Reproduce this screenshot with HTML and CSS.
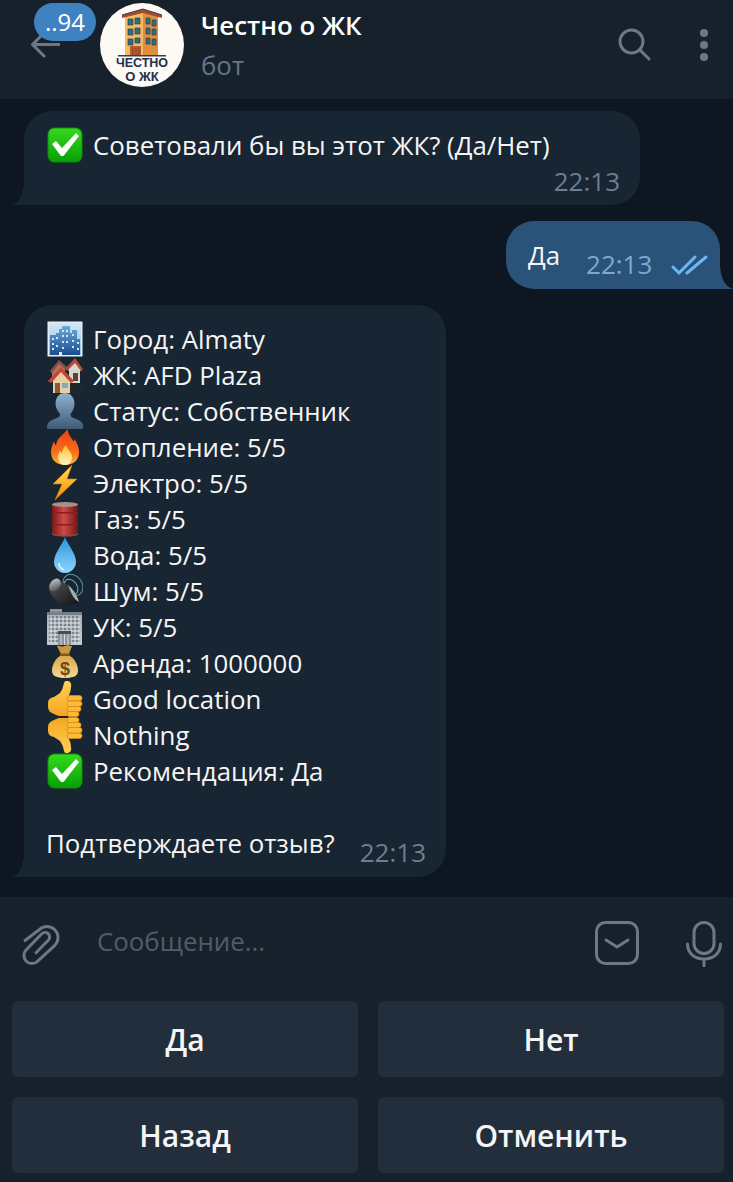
FILE: index.html
```html
<!DOCTYPE html>
<html lang="ru">
<head>
<meta charset="utf-8">
<title>Честно о ЖК</title>
<link rel="stylesheet" href="styles.css">
</head>
<body>
<svg class="defs" width="0" height="0" aria-hidden="true">
  <defs>
    <linearGradient id="gGreen" x1="0" y1="0" x2="0" y2="1"><stop offset="0" stop-color="#35d91c"/><stop offset="1" stop-color="#07a006"/></linearGradient>
    <linearGradient id="gCity" x1="0" y1="0" x2="0" y2="1"><stop offset="0" stop-color="#cfe8f8"/><stop offset="1" stop-color="#8fbde0"/></linearGradient>
    <linearGradient id="gTower" x1="0" y1="0" x2="0" y2="1"><stop offset="0" stop-color="#6ea8dc"/><stop offset="1" stop-color="#1a4c90"/></linearGradient>
    <linearGradient id="gPerson" x1="0" y1="0" x2="0" y2="1"><stop offset="0" stop-color="#90b3d2"/><stop offset="1" stop-color="#3c5a78"/></linearGradient>
    <linearGradient id="gFire" x1="0" y1="0" x2="0" y2="1"><stop offset="0" stop-color="#ee3a16"/><stop offset="0.65" stop-color="#f6721a"/><stop offset="1" stop-color="#ffb52e"/></linearGradient>
    <linearGradient id="gFlame" x1="0" y1="0" x2="0" y2="1"><stop offset="0" stop-color="#ffc02e"/><stop offset="1" stop-color="#fff6c8"/></linearGradient>
    <linearGradient id="gBolt" x1="0" y1="0" x2="0" y2="1"><stop offset="0" stop-color="#ffe14a"/><stop offset="1" stop-color="#f58a10"/></linearGradient>
    <linearGradient id="gBarrel" x1="0" y1="0" x2="1" y2="0"><stop offset="0" stop-color="#7a1818"/><stop offset="0.45" stop-color="#d04a4a"/><stop offset="1" stop-color="#6d1414"/></linearGradient>
    <linearGradient id="gDrop" x1="0" y1="0" x2="0" y2="1"><stop offset="0" stop-color="#2a94dc"/><stop offset="1" stop-color="#8fd6fa"/></linearGradient>
    <linearGradient id="gCone" x1="0" y1="0" x2="1" y2="1"><stop offset="0" stop-color="#55585c"/><stop offset="1" stop-color="#111215"/></linearGradient>
    <linearGradient id="gMagnet" x1="0" y1="0" x2="1" y2="1"><stop offset="0" stop-color="#d5d8db"/><stop offset="1" stop-color="#3b3d41"/></linearGradient>
    <linearGradient id="gOffice" x1="0" y1="0" x2="0" y2="1"><stop offset="0" stop-color="#a9b0b6"/><stop offset="1" stop-color="#c4cacf"/></linearGradient>
    <linearGradient id="gBag" x1="0" y1="0" x2="0" y2="1"><stop offset="0" stop-color="#dba74e"/><stop offset="1" stop-color="#f4d98f"/></linearGradient>
    <linearGradient id="gThumb" x1="0" y1="0" x2="0" y2="1"><stop offset="0" stop-color="#ffd152"/><stop offset="1" stop-color="#f5a623"/></linearGradient>

    <symbol id="e-check" viewBox="0 0 36 36">
      <rect x="0.5" y="0.5" width="35" height="35" rx="7" fill="#0c8f0a"/>
      <rect x="1.5" y="1.5" width="33" height="33" rx="6" fill="url(#gGreen)"/>
      <path d="M5 17 L9 14 L15 21 L29 6 L32 9 L16.500 29 L14 29 Z" fill="#fff"/>
    </symbol>
    <symbol id="e-city" viewBox="0 0 36 36">
      <rect x="0.5" y="0.5" width="35" height="35" fill="#e6eef4"/>
      <rect x="2" y="2" width="32" height="32" fill="url(#gCity)"/>
      <path d="M3 34V14h6v-2h4v22zM12 34V8h3V5h8v29zM22 34V12h3V9h5v25zM28 34V18h5v16z" fill="url(#gTower)"/>
      <path d="M5 17h2v2H5zM5 22h2v2H5zM5 27h2v2H5zM9 16h2v2H9zM9 24h2v2H9zM15 9h2v2h-2zM19 9h2v2h-2zM15 14h2v2h-2zM19 14h2v2h-2zM15 20h2v2h-2zM19 20h2v2h-2zM15 26h2v2h-2zM25 13h2v2h-2zM25 19h2v2h-2zM25 25h2v2h-2zM30 21h2v2h-2zM30 27h2v2h-2z" fill="#cfe8f8"/>
      <rect x="12" y="31" width="3" height="3" fill="#d9eefa"/>
    </symbol>
    <symbol id="e-houses" viewBox="0 0 36 36">
      <path d="M14 20h14l8 10v6H14z" fill="#1f262c"/>
      <path d="M5 13 L12 4 L18 12 V20 H5Z" fill="#a8766a"/>
      <path d="M21 13 L28 3 L35 13 L33 14 V26 H22 V14Z" fill="#dad6ce"/>
      <path d="M18 12 L28 1 L36 12 L34 14 L28 6 L20 14Z" fill="#b04a3c"/>
      <path d="M3 14 L12 3 L21 11 L19 13 L12 7 L5 16Z" fill="#8f4e44"/>
      <rect x="26" y="16" width="5" height="8" fill="#5d4330"/>
      <path d="M5 23 L14 12 L24 23 L23 25 V36 H6 V25Z" fill="#e7cfa5"/>
      <path d="M1 24 L14 10 L27 24 L24 26 L14 15 L4 26Z" fill="#c7462f"/>
      <rect x="8" y="26" width="5" height="10" fill="#8a5a32"/>
      <rect x="15" y="26" width="6" height="5" fill="#7fa8c8"/>
    </symbol>
    <symbol id="e-person" viewBox="0 0 36 36">
      <path d="M18 0c6 0 9.500 5 9.500 10.500 0 4.500-2 8-4 10.500 0 2 .5 3 3 4 4 1.500 8 3 9.500 6.500.5 1 .5 3 .5 4.500H0c0-1.500 0-3.500.5-4.500C2 28 6 26.500 10 25c2.500-1 3-2 3-4-2-2.500-4.500-6-4.500-10.500C8.500 5 12 0 18 0z" fill="url(#gPerson)"/>
    </symbol>
    <symbol id="e-fire" viewBox="0 0 36 36">
      <g transform="translate(4 0) scale(0.78 1)">
        <path d="M21 0c1 5 4 7.500 7 11.500 1 1.500 1.500 1 2-1.500 3 3.500 6 8 6 13C36 31 29 36 18 36S0 31 0 23c0-4.500 2.500-8 4-11 .5 2 1 3.500 2.500 4.500C7 9 15 7 21 0z" fill="url(#gFire)"/>
        <path d="M19 16c1 4 8 7 8 12 0 5-4 8-9 8s-9-3-9-8c0-3 1.500-5 3-6.500.5 1.500 1 2 2 2.500 0-4 3-5 5-8z" fill="url(#gFlame)"/>
      </g>
    </symbol>
    <symbol id="e-bolt" viewBox="0 0 36 36">
      <path d="M25 0 L6 19 L15 19 L8 35 L30 14 L20 14 Z" fill="url(#gBolt)" stroke="#c97a0a" stroke-width="0.6"/>
    </symbol>
    <symbol id="e-barrel" viewBox="0 0 36 36">
      <rect x="5" y="2" width="26" height="33" rx="4" fill="url(#gBarrel)"/>
      <ellipse cx="18" cy="3.500" rx="13" ry="2.500" fill="#a9908a"/>
      <rect x="5" y="11" width="26" height="1.500" fill="#8a1f1f"/>
      <rect x="5" y="23" width="26" height="1.500" fill="#8a1f1f"/>
      <path d="M5 32c3 3 23 3 26 0v1.500c-3 3-23 3-26 0z" fill="#8a4a3a"/>
    </symbol>
    <symbol id="e-drop" viewBox="0 0 36 36">
      <path d="M18 0c2 7 11 16 11 25 0 6-5 11-11 11S7 31 7 25C7 16 16 7 18 0z" fill="url(#gDrop)"/>
      <path d="M12 26c0 3 2 6 5 7" stroke="#d8f3ff" stroke-width="1.500" fill="none"/>
    </symbol>
    <symbol id="e-speaker" viewBox="0 0 36 36">
      <ellipse cx="26" cy="12" rx="9" ry="11.500" transform="rotate(-35 26 12)" fill="none" stroke="#5f9aa0" stroke-width="1"/>
      <ellipse cx="24" cy="14" rx="6" ry="8.500" transform="rotate(-35 24 14)" fill="none" stroke="#76b4b8" stroke-width="1"/>
      <path d="M2 17 Q2 8 9 6 L21 12 L32 29 Q25 33 15 31 Q6 27 2 17Z" fill="url(#gCone)"/>
      <ellipse cx="8" cy="12" rx="5" ry="7" fill="url(#gMagnet)" transform="rotate(35 8 12)"/>
      <path d="M21 12 Q29 18 32 29 Q26 27 21 12Z" fill="#a8acb0"/>
    </symbol>
    <symbol id="e-office" viewBox="0 0 36 36">
      <rect x="0" y="3" width="35" height="33" fill="url(#gOffice)"/>
      <rect x="3" y="0" width="12" height="4" fill="#8e9499"/>
      <rect x="0" y="3" width="35" height="3" fill="#777e84"/>
      <path d="M2 8h31M2 12h31M2 16h31M2 20h31M2 24h31M2 28h31M2 32h31" stroke="#64717d" stroke-width="1.500"/>
      <path d="M4 7v27M8 7v27M12 7v27M16 7v27M20 7v27M24 7v27M28 7v27M32 7v27" stroke="#e4e8ea" stroke-width="1"/>
      <rect x="11" y="23" width="13" height="13" fill="#8d9397"/>
      <rect x="11" y="22" width="13" height="3" fill="#474d52"/>
      <path d="M14 25v11M17.500 25v11M21 25v11" stroke="#d4d8da" stroke-width="1"/>
    </symbol>
    <symbol id="e-bag" viewBox="0 0 36 36">
      <path d="M10 1c3-1 4 1 6 .5 2-.5 4-1.500 6-1 1 .5 2 .5 3 .5L22 9H14z" fill="#c9983f"/>
      <rect x="13" y="8.500" width="10" height="2.500" fill="#7e5a22"/>
      <path d="M13 11h10c5 3 8 9 8 15 0 5-5 7-13 7S5 31 5 26c0-6 3-12 8-15z" fill="url(#gBag)"/>
      <text x="18" y="30" text-anchor="middle" class="bag-sign">$</text>
    </symbol>
    <symbol id="e-up" viewBox="0 0 36 36">
      <path d="M1 22 Q1 17 7 16 L13 12 Q16 8 17 2 Q18 -1 21 0 Q25 1 24 6 Q24 10 22 14 L22 35 L12 35 Q9 34 7 33 Q1 31 1 26Z" fill="url(#gThumb)"/>
      <g fill="#fbbb36" stroke="#d48c1a" stroke-width="0.8">
        <rect x="20" y="14.500" width="15" height="5.500" rx="2.700"/>
        <rect x="20" y="20" width="15" height="5.500" rx="2.700"/>
        <rect x="20" y="25.500" width="14" height="5" rx="2.500"/>
        <rect x="20" y="30.500" width="12" height="5" rx="2.500"/>
      </g>
    </symbol>
    <symbol id="e-down" viewBox="0 0 36 36">
      <g transform="translate(0 36) scale(1 -1)">
        <path d="M1 22 Q1 17 7 16 L13 12 Q16 8 17 2 Q18 -1 21 0 Q25 1 24 6 Q24 10 22 14 L22 35 L12 35 Q9 34 7 33 Q1 31 1 26Z" fill="url(#gThumb)"/>
        <g fill="#fbbb36" stroke="#d48c1a" stroke-width="0.8">
          <rect x="20" y="14.500" width="15" height="5.500" rx="2.700"/>
          <rect x="20" y="20" width="15" height="5.500" rx="2.700"/>
          <rect x="20" y="25.500" width="14" height="5" rx="2.500"/>
          <rect x="20" y="30.500" width="12" height="5" rx="2.500"/>
        </g>
      </g>
    </symbol>
  </defs>
</svg>

<div class="app">
  <header class="topbar">
    <div class="back">
      <svg class="back-arrow" width="30" height="28" viewBox="0 0 30 28"><path d="M29 13.500H3M14 2 L2.500 13.500 L14 25" fill="none" stroke="#6c7883" stroke-width="3" stroke-linecap="round" stroke-linejoin="round"/></svg>
      <span class="badge">..94</span>
    </div>
    <svg class="avatar" width="84" height="84" viewBox="0 0 84 84">
      <circle cx="42" cy="42" r="42" fill="#fdfaf3"/>
      <path d="M25 13 L43 8 L58 13 V52 H25Z" fill="#f4bb62"/>
      <path d="M43 9 L58 13 V52 H43Z" fill="#dd8f3d"/>
      <path d="M22 12 L43 6 L62 12 L62 15 L43 10 L22 15Z" fill="#a34a2c"/>
      <path d="M22 12 L43 6 L62 12" fill="none" stroke="#33404f" stroke-width="1"/>
      <path d="M28 16h5v6h-5zM35 15h5v6h-5zM46 15h4v6h-4zM52 17h4v6h-4zM28 26h5v6h-5zM35 25h5v6h-5zM46 25h4v6h-4zM52 26h4v6h-4zM28 36h5v6h-5zM35 35h5v5h-5zM46 35h4v6h-4zM52 36h4v6h-4z" fill="#2f6e80" stroke="#33404f" stroke-width="0.7"/>
      <rect x="30" y="43" width="11" height="9" fill="#b65a32"/>
      <path d="M33 45v7M36 45v7M39 45v7" stroke="#7d3b22" stroke-width="0.7"/>
      <rect x="18" y="52" width="48" height="1.500" fill="#33404f"/>
      <text x="42" y="64" text-anchor="middle" class="logo-text">ЧЕСТНО</text>
      <text x="42" y="78" text-anchor="middle" class="logo-text logo-text-big">О ЖК</text>
    </svg>
    <div class="title">
      <span class="title-name">Честно о ЖК</span>
      <span class="title-sub">бот</span>
    </div>
    <svg class="search" width="36" height="36" viewBox="0 0 36 36"><circle cx="14.500" cy="14.500" r="11.500" fill="none" stroke="#6c7883" stroke-width="3"/><path d="M23 23 L32 32" stroke="#6c7883" stroke-width="3" stroke-linecap="round"/></svg>
    <div class="dots"><i></i><i></i><i></i></div>
  </header>

  <main class="chat">
    <section class="bubble in short">
      <p class="line"><svg class="emoji"><use href="#e-check"/></svg><span>Советовали бы вы этот ЖК? (Да/Нет)</span></p>
      <div class="meta-row"><time>22:13</time></div>
    </section>

    <section class="bubble out">
      <span class="out-text">Да</span>
      <time>22:13</time>
      <svg class="ticks" width="38" height="22" viewBox="0 0 38 22"><path d="M2 12 L8 18 L24 2 M16 18 L35 2" fill="none" stroke="#6ab8f5" stroke-width="3" stroke-linecap="round" stroke-linejoin="round"/></svg>
    </section>

    <section class="bubble in long">
      <p class="line"><svg class="emoji"><use href="#e-city"/></svg><span>Город: Almaty</span></p>
      <p class="line"><svg class="emoji"><use href="#e-houses"/></svg><span>ЖК: AFD Plaza</span></p>
      <p class="line"><svg class="emoji"><use href="#e-person"/></svg><span>Статус: Собственник</span></p>
      <p class="line"><svg class="emoji"><use href="#e-fire"/></svg><span>Отопление: 5/5</span></p>
      <p class="line"><svg class="emoji"><use href="#e-bolt"/></svg><span>Электро: 5/5</span></p>
      <p class="line"><svg class="emoji"><use href="#e-barrel"/></svg><span>Газ: 5/5</span></p>
      <p class="line"><svg class="emoji"><use href="#e-drop"/></svg><span>Вода: 5/5</span></p>
      <p class="line"><svg class="emoji"><use href="#e-speaker"/></svg><span>Шум: 5/5</span></p>
      <p class="line"><svg class="emoji"><use href="#e-office"/></svg><span>УК: 5/5</span></p>
      <p class="line"><svg class="emoji"><use href="#e-bag"/></svg><span>Аренда: 1000000</span></p>
      <p class="line"><svg class="emoji"><use href="#e-up"/></svg><span>Good location</span></p>
      <p class="line"><svg class="emoji"><use href="#e-down"/></svg><span>Nothing</span></p>
      <p class="line"><svg class="emoji"><use href="#e-check"/></svg><span>Рекомендация: Да</span></p>
      <p class="line blank"></p>
      <p class="line last"><span>Подтверждаете отзыв?</span><time>22:13</time></p>
    </section>
  </main>

  <footer class="composer">
    <div class="input-row">
      <svg class="attach" width="40" height="46" viewBox="0 0 40 46"><path d="M3 17.500 L17.200 6.700 A11 11 0 0 1 32.800 22.300 L15.700 38.200 A8 8 0 0 1 4.300 26.800 L19.500 11 A4.500 4.500 0 0 1 26.500 17 L14 29.700" fill="none" stroke="#6c7883" stroke-width="3" stroke-linecap="round" stroke-linejoin="round"/></svg>
      <span class="placeholder">Сообщение...</span>
      <svg class="sticker" width="44" height="44" viewBox="0 0 44 44"><rect x="1.500" y="1.500" width="41" height="41" rx="9" fill="none" stroke="#6c7883" stroke-width="3"/><path d="M11 19 L22 26 L33 19" fill="none" stroke="#6c7883" stroke-width="3" stroke-linecap="round" stroke-linejoin="round"/></svg>
      <svg class="mic" width="36" height="46" viewBox="0 0 36 46"><rect x="8" y="1.500" width="20" height="31" rx="10" fill="none" stroke="#6c7883" stroke-width="3"/><path d="M1.500 23c0 9 7 15 16.500 15s16.500-6 16.500-15M18 38v7" fill="none" stroke="#6c7883" stroke-width="3" stroke-linecap="round"/></svg>
    </div>
    <div class="keyboard">
      <button class="key">Да</button>
      <button class="key">Нет</button>
      <button class="key">Назад</button>
      <button class="key">Отменить</button>
    </div>
  </footer>
</div>
</body>
</html>
```
FILE: styles.css
```css
* { box-sizing: border-box; }
html, body { margin: 0; padding: 0; height: 100%; background: #0e1621; }
body { font-family: "Open Sans", "Noto Sans", sans-serif; color: #f5f5f5; overflow: hidden; }
.defs { display: block; width: 0; height: 0; overflow: hidden; }
.app { display: flex; flex-direction: column; height: 1182px; }

.topbar { flex: 0 0 99px; display: flex; align-items: flex-start; background: #17212b; }
.back { position: relative; width: 100px; height: 99px; display: flex; padding: 31px 0 0 30px; }
.back-arrow { display: block; }
.badge { position: absolute; left: 34px; top: 3px; width: 62px; height: 38px; border-radius: 19px; background: #3f82c1; color: #fff; font-size: 24px; line-height: 38px; text-align: center; font-weight: 500; }
.avatar { display: block; margin-top: 3px; flex: none; }
.logo-text { font-family: "Liberation Sans", sans-serif; font-weight: 700; font-size: 12.500px; fill: #1f2f4d; }
.logo-text-big { font-size: 13px; }
.bag-sign { font-family: "Liberation Sans", sans-serif; font-weight: 700; font-size: 18px; fill: #6d4a18; }
.title { display: flex; flex-direction: column; margin-left: 17px; flex: 1; padding-top: 6px; }
.title-name { font-size: 25.850px; line-height: 38px; font-weight: 600; color: #fff; }
.title-sub { font-size: 25.850px; line-height: 38px; margin-top: 2px; color: #63778b; }
.search { margin: 27px 14px 0 0; display: block; flex: none; }
.dots { width: 8px; display: flex; flex-direction: column; gap: 4px; margin: 29px 25px 0 33px; flex: none; }
.dots i { width: 8px; height: 8px; border-radius: 50%; background: #6c7883; display: block; }

.chat { flex: 1; display: flex; flex-direction: column; gap: 16px; padding-top: 12px; min-height: 0; }
.bubble { position: relative; border-radius: 28px; }
.bubble::after { content: ""; position: absolute; bottom: 0; width: 13px; height: 24px; background: inherit; }
.in { align-self: flex-start; margin-left: 24px; background: #182533; border-bottom-left-radius: 0; }
.in::after { left: -12px; width: 12px; clip-path: path("M12 0 V24 H0 Q11 20 12 0 Z"); }
.out { align-self: flex-end; margin-right: 13px; background: #2b5278; border-bottom-right-radius: 0; height: 68px; width: 214px; display: flex; align-items: flex-start; padding: 0 0 0 22px; }
.out::after { right: -13px; clip-path: path("M0 0 V24 H13 Q1 20 0 0 Z"); }

.line { display: flex; align-items: center; gap: 10px; height: 36px; margin: 0; font-size: 25.850px; line-height: 36px; white-space: nowrap; }
.emoji { width: 36px; height: 36px; flex: none; display: block; }
time { font-size: 26px; line-height: 36px; color: #6d7f8f; }

.short { width: 616px; height: 94px; padding: 16px 20px 0 23px; }
.meta-row { display: flex; justify-content: flex-end; line-height: 36px; }

.out-text { font-size: 25.850px; line-height: 36px; margin-top: 16px; }
.out time { color: #7da8d3; margin: 25px 0 0 26px; }
.ticks { display: block; margin: 34px 0 0 19px; flex: none; }

.long { width: 422px; height: 572px; padding: 16px 20px 0 23px; }
.last { justify-content: space-between; gap: 0; overflow: visible; }
.last span { margin-left: -1px; }
.last time { transform: translateY(9px); }

.composer { flex: 0 0 285px; display: flex; flex-direction: column; background: #17212b; }
.input-row { flex: 0 0 104px; display: flex; align-items: flex-start; padding: 24px 11px 0 22px; }
.attach { display: block; flex: none; margin-top: 2px; }
.placeholder { flex: 1; margin: 2px 0 0 35px; font-size: 25.850px; line-height: 36px; color: #4f5d6a; }
.sticker { display: block; flex: none; margin: 0 47px 0 0; }
.mic { display: block; flex: none; }
.keyboard { display: grid; grid-template-columns: 346px 346px; grid-auto-rows: 76px; gap: 20px; padding: 0 9px 0 12px; }
.key { border: 0; border-radius: 6px; background: #232e3c; color: #f5f5f5; font-family: inherit; font-size: 30px; font-weight: 600; padding: 0; }
```
